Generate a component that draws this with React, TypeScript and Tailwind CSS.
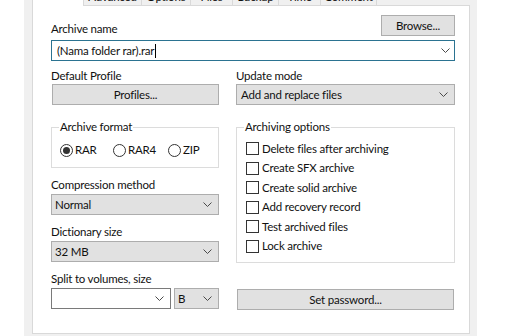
import React from 'react';

const tabs = [
  { label: 'Advanced', w: 'w-[58px]' },
  { label: 'Options', w: 'w-[49px]' },
  { label: 'Files', w: 'w-[42px]' },
  { label: 'Backup', w: 'w-[46px]' },
  { label: 'Time', w: 'w-[42px]' },
  { label: 'Comment', w: 'w-[56px]' },
];

const options = [
  'Delete files after archiving',
  'Create SFX archive',
  'Create solid archive',
  'Add recovery record',
  'Test archived files',
  'Lock archive',
];

function Chevron() {
  return (
    <svg width="9" height="5" viewBox="0 0 9 5" className="shrink-0">
      <path d="M0.5 0.5 L4.5 4.5 L8.5 0.5" fill="none" stroke="#4a4a4a" strokeWidth="1" />
    </svg>
  );
}

function Combo({ value, className = '' }: { value: string; className?: string }) {
  return (
    <div
      className={`flex h-[21px] items-center justify-between border border-[#adadad] bg-[#e1e1e1] pl-[3px] pr-[6px] ${className}`}
    >
      <span>{value}</span>
      <Chevron />
    </div>
  );
}

function Button({ text, className = '' }: { text: string; className?: string }) {
  return (
    <div
      className={`flex h-[21px] items-center justify-center border border-[#adadad] bg-[#e1e1e1] ${className}`}
    >
      {text}
    </div>
  );
}

function Label({ text, className = '' }: { text: string; className?: string }) {
  return <div className={`h-[16px] leading-[16px] ${className}`}>{text}</div>;
}

function Radio({ text, checked, className = '' }: { text: string; checked?: boolean; className?: string }) {
  return (
    <div className={`flex items-center gap-[2px] ${className}`}>
      <span className="flex h-[13px] w-[13px] items-center justify-center rounded-full border border-[#333] bg-white">
        {checked && <span className="h-[7px] w-[7px] rounded-full bg-[#333]" />}
      </span>
      <span>{text}</span>
    </div>
  );
}

function Check({ text }: { text: string }) {
  return (
    <div className="flex h-[19.5px] items-center gap-[3px]">
      <span className="h-[13px] w-[13px] border border-[#333] bg-white" />
      <span>{text}</span>
    </div>
  );
}

export default function App() {
  return (
    <div className="h-[336px] w-[507px] overflow-hidden bg-white font-['Lato',sans-serif] text-[11.5px] leading-[16px] tracking-[-0.2px] text-[#111]">
      <div className="ml-[24px] mt-[-16px] h-[352px] w-[453px] bg-[#f0f0f0] pl-[8px]">
        {/* tab strip */}
        <div className="relative z-10 flex h-[21px]">
          <div className="mb-[-1px] h-[22px] w-[52px] border border-b-0 border-[#d9d9d9] bg-white" />
          {tabs.map((t) => (
            <div
              key={t.label}
              className={`${t.w} h-[21px] overflow-hidden border-r border-t border-[#d9d9d9] bg-[#f0f0f0] pt-[4px] text-center`}
            >
              {t.label}
            </div>
          ))}
        </div>

        {/* panel */}
        <div className="h-[329px] w-[438px] border border-[#d9d9d9] bg-white pl-[18px] pr-[14px] pt-[9px]">
          <div className="flex items-end justify-between">
            <Label text="Archive name" className="mb-[-1px]" />
            <Button text="Browse..." className="w-[74px]" />
          </div>
          <div className="mt-[4px] flex h-[21px] items-center justify-between border border-[#2b7391] bg-white pl-[5px] pr-[4px]">
            <span className="flex items-center">
              (Nama folder rar).rar
              <span className="ml-[1px] h-[14px] w-[1px] bg-black" />
            </span>
            <Chevron />
          </div>

          <div className="flex gap-[17px]">
            {/* left column */}
            <div className="flex w-[168px] flex-col">
              <Label text="Default Profile" className="mt-[7px]" />
              <Button text="Profiles..." className="ml-[1px] w-[167px]" />
              <fieldset className="mt-[14px] h-[49px] border border-[#dcdcdc] px-0 pb-0">
                <legend className="ml-[7px] px-[1px] leading-[16px]">Archive format</legend>
                <div className="mt-[7px] flex items-center pl-[8px]">
                  <Radio text="RAR" checked className="w-[53px]" />
                  <Radio text="RAR4" className="w-[55px]" />
                  <Radio text="ZIP" />
                </div>
              </fieldset>
              <Label text="Compression method" className="mt-[9px]" />
              <Combo value="Normal" className="mt-[1px]" />
              <Label text="Dictionary size" className="mt-[9px]" />
              <Combo value="32 MB" className="mt-[1px]" />
              <Label text="Split to volumes, size" className="mt-[9px]" />
              <div className="mt-[1px] flex gap-[3px]">
                <div className="flex h-[21px] w-[120px] items-center justify-end border border-[#7a7a7a] bg-white pr-[6px]">
                  <Chevron />
                </div>
                <Combo value="B" className="w-[45px]" />
              </div>
            </div>

            {/* right column */}
            <div className="flex w-[219px] flex-col">
              <Label text="Update mode" className="mt-[7px]" />
              <Combo value="Add and replace files" className="pl-[4px]" />
              <fieldset className="mt-[14px] h-[144px] border border-[#dcdcdc] px-0 pb-0">
                <legend className="ml-[7px] px-[1px] leading-[16px]">Archiving options</legend>
                <div className="mt-[4px] flex flex-col pl-[9px]">
                  {options.map((o) => (
                    <Check key={o} text={o} />
                  ))}
                </div>
              </fieldset>
              <Button text="Set password..." className="ml-[1px] mt-[26px] w-[217px]" />
            </div>
          </div>
        </div>
      </div>
    </div>
  );
}
